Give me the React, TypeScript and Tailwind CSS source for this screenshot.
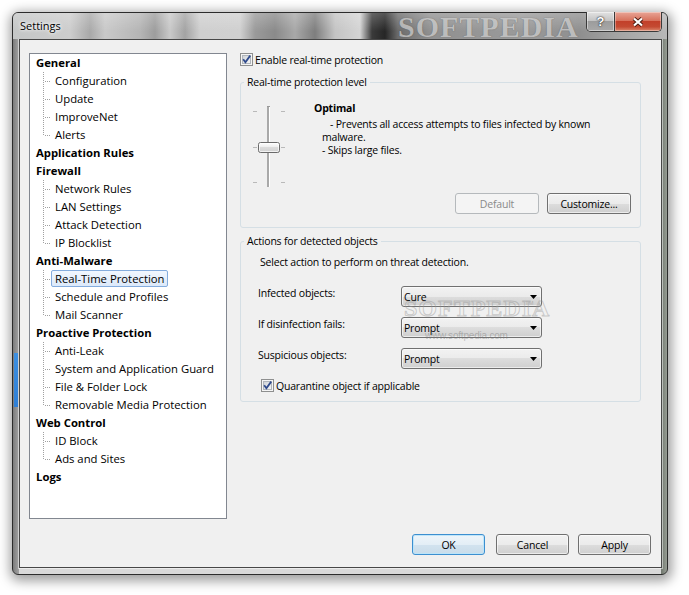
import React from 'react';

const tree: { label: string; children: string[] }[] = [
  { label: 'General', children: ['Configuration', 'Update', 'ImproveNet', 'Alerts'] },
  { label: 'Application Rules', children: [] },
  { label: 'Firewall', children: ['Network Rules', 'LAN Settings', 'Attack Detection', 'IP Blocklist'] },
  { label: 'Anti-Malware', children: ['Real-Time Protection', 'Schedule and Profiles', 'Mail Scanner'] },
  {
    label: 'Proactive Protection',
    children: ['Anti-Leak', 'System and Application Guard', 'File & Folder Lock', 'Removable Media Protection'],
  },
  { label: 'Web Control', children: ['ID Block', 'Ads and Sites'] },
  { label: 'Logs', children: [] },
];

function Connector({ last }: { last: boolean }) {
  return (
    <svg width="8" height="18" className="shrink-0" aria-hidden>
      <line x1="0.5" y1="0" x2="0.5" y2={last ? 10 : 18} stroke="#a0a0a0" strokeDasharray="1 1" />
      <line x1="2" y1="9.5" x2="8" y2="9.5" stroke="#a0a0a0" strokeDasharray="1 1" />
    </svg>
  );
}

function CheckBox() {
  return (
    <svg width="13" height="13" viewBox="0 0 13 13" className="shrink-0" aria-hidden>
      <defs>
        <linearGradient id="cbfill" x1="0" y1="0" x2="1" y2="1">
          <stop offset="0" stopColor="#cdd1d6" />
          <stop offset="1" stopColor="#f7f7f7" />
        </linearGradient>
      </defs>
      <rect x="0.5" y="0.5" width="12" height="12" fill="#f5f5f5" stroke="#8e8f8f" />
      <rect x="2.5" y="2.5" width="8" height="8" fill="url(#cbfill)" stroke="#b0b5bb" />
      <path d="M3.2 6.3 L5.4 9.2 L10.2 2.6" fill="none" stroke="#2f4a8c" strokeWidth="1.8" />
    </svg>
  );
}

function Slider() {
  return (
    <svg width="35" height="83" viewBox="0 0 35 83" className="shrink-0" aria-hidden>
      <defs>
        <linearGradient id="thumb" x1="0" y1="0" x2="0" y2="1">
          <stop offset="0" stopColor="#ffffff" />
          <stop offset="0.5" stopColor="#ececec" />
          <stop offset="0.5" stopColor="#dcdcdc" />
          <stop offset="1" stopColor="#d0d0d0" />
        </linearGradient>
      </defs>
      <rect x="14" y="1" width="2" height="81" fill="#a9a9a9" />
      <rect x="16" y="1" width="1" height="81" fill="#ffffff" />
      <rect x="14" y="1" width="3" height="1" fill="#9a9a9a" />
      {[6, 42, 77].map((y) => (
        <g key={y}>
          <rect x="0" y={y} width="4" height="1" fill="#b9b9b9" />
          <rect x="28" y={y} width="4" height="1" fill="#b9b9b9" />
        </g>
      ))}
      <rect x="5.5" y="37.5" width="21" height="10" rx="2" fill="url(#thumb)" stroke="#6a6a6a" />
      <rect x="6.5" y="38.5" width="19" height="8" rx="1" fill="none" stroke="#ffffff" strokeOpacity="0.7" />
    </svg>
  );
}

function Combo({ value }: { value: string }) {
  return (
    <div className="flex h-[21px] w-[141px] shrink-0 items-center rounded-[3px] border border-[#707070] bg-[linear-gradient(180deg,#f2f2f2_0%,#ebebeb_50%,#dddddd_50%,#cfcfcf_100%)] pl-[2px] pr-[4px] shadow-[inset_0_0_0_1px_rgba(255,255,255,0.6)]">
      <span className="mt-[1px] leading-[16px]">{value}</span>
      <svg width="7" height="4" viewBox="0 0 7 4" className="ml-auto" aria-hidden>
        <path d="M0 0H7L3.5 4Z" fill="#000" />
      </svg>
    </div>
  );
}

function Btn({
  children,
  w,
  kind = 'normal',
}: {
  children: React.ReactNode;
  w: string;
  kind?: 'normal' | 'default' | 'disabled';
}) {
  const base = 'flex h-[21px] shrink-0 items-center justify-center rounded-[3px] border leading-[16px] ';
  const style =
    kind === 'default'
      ? 'border-[#3c8fd0] bg-[linear-gradient(180deg,#eef5fa_0%,#e3eef6_50%,#d2e3ef_50%,#c9dcea_100%)] shadow-[inset_0_0_0_1px_rgba(186,228,250,0.9)] text-black'
      : kind === 'disabled'
      ? 'border-[#b5b9bc] bg-[#f4f4f4] text-[#8a8a8a]'
      : 'border-[#707070] bg-[linear-gradient(180deg,#f2f2f2_0%,#ebebeb_50%,#dddddd_50%,#cfcfcf_100%)] shadow-[inset_0_0_0_1px_rgba(255,255,255,0.6)] text-black';
  return <div className={base + style + ' ' + w}>{children}</div>;
}

export default function App() {
  return (
    <div className="h-[595px] w-[689px] overflow-hidden bg-white pt-[12px] pl-[12px] font-['Open_Sans',sans-serif] text-[10.5px] leading-[16px] tracking-[-0.2px] text-black">
      <div className="relative flex h-[563px] w-[656px] flex-col rounded-[6px] border border-[#2c2c2c] shadow-[1px_3px_12px_3px_rgba(0,0,0,0.38)] [background:linear-gradient(180deg,#3d8fe0,#2f7fd6)_1px_340px/4px_54px_no-repeat,linear-gradient(90deg,#7c7c7c_0px,#a4a4a4_6px,#d9d9d9_6px,#d9d9d9_648px,#6f766d_648px,#979d94_654px)]">
        {/* title bar */}
        <div className="relative flex h-[26px] items-start rounded-t-[5px] [background:linear-gradient(180deg,rgba(255,255,255,0.22),rgba(255,255,255,0)_70%),linear-gradient(90deg,#c4c6c6_0px,#cdcdcd_57px,#a9a9a9_77px,#c9c9c9_92px,#b5b5b5_127px,#9d9d9d_142px,#c9c9c9_157px,#a3a3a3_172px,#cfcfcf_187px,#d0d0d0_227px,#9a9a9a_242px,#8a8a8a_262px,#a8a8a8_282px,#7e7e7e_302px,#c4c4c4_322px,#d4d4d4_347px,#3a3a3a_359px,#262626_372px,#6b6b6b_385px,#909090_417px,#9a9a9a_507px,#8f8f8f_567px,#a5a5a5_607px,#b8b8b8_655px)]">
          <span className="ml-[7px] mt-[5px] text-[11px] tracking-normal [text-shadow:0_0_5px_#fff,0_0_3px_#fff]">
            Settings
          </span>
          <span className="pointer-events-none absolute left-[385px] top-[-1px] font-['Liberation_Serif',serif] text-[30px] font-bold leading-[30px] tracking-[1px] text-[#cfcfcf] opacity-70 [text-shadow:0_0_1px_#4a4a4a]">
            SOFTPEDIA
          </span>
          <div className="relative ml-auto mr-[5px] mt-[-1px] flex h-[20px] overflow-hidden rounded-b-[5px] border border-t-0 border-[#3a3a3a]">
            <div className="flex h-full w-[28px] items-center justify-center border-r border-[#3a3a3a] bg-[linear-gradient(180deg,#e2e2e2_0%,#c4c4c4_45%,#9c9c9c_50%,#a9a9a9_100%)] shadow-[inset_0_0_0_1px_rgba(255,255,255,0.45)]">
              <span className="font-['Liberation_Sans',sans-serif] text-[13px] font-bold leading-[14px] tracking-normal text-white [text-shadow:0_0_1px_#222,0_0_2px_#222]">
                ?
              </span>
            </div>
            <div className="flex h-full w-[46px] items-center justify-center bg-[linear-gradient(180deg,#e9a596_0%,#d7725d_45%,#c2402a_50%,#c44a32_78%,#dc8a6f_100%)] shadow-[inset_0_0_0_1px_rgba(255,255,255,0.35)]">
              <svg width="12" height="10" viewBox="0 0 12 10" aria-hidden>
                <path d="M2 1.5L10 8.5M10 1.5L2 8.5" stroke="#4b1a10" strokeWidth="4" />
                <path d="M2 1.5L10 8.5M10 1.5L2 8.5" stroke="#ffffff" strokeWidth="2.2" />
              </svg>
            </div>
          </div>
        </div>

        {/* client area */}
        <div className="mb-[6px] ml-[6px] mr-[5px] flex flex-1 flex-col border border-[#474747] bg-[#f0f0f0] pl-[9px] pt-[13px] shadow-[0_0_0_1px_rgba(255,255,255,0.5)]">
          <div className="flex h-[466px]">
            {/* tree */}
            <div className="h-[466px] w-[198px] shrink-0 border border-[#828790] bg-white text-[11.3px] tracking-normal">
              {tree.map((cat) => (
                <div key={cat.label}>
                  <div className="flex h-[18px] items-center pl-[6px] font-bold">{cat.label}</div>
                  {cat.children.map((child, i) => {
                    const selected = child === 'Real-Time Protection';
                    return (
                      <div key={child} className="flex h-[18px] items-start pl-[13px]">
                        <Connector last={i === cat.children.length - 1} />
                        <span
                          className={
                            'flex h-[17px] items-center whitespace-nowrap rounded-[2px] border px-[3px] ' +
                            (selected
                              ? 'border-[#84acdd] bg-[linear-gradient(180deg,#f1f7fe_0%,#dce9fa_100%)]'
                              : 'border-transparent')
                          }
                        >
                          {child}
                        </span>
                      </div>
                    );
                  })}
                </div>
              ))}
            </div>

            {/* right pane */}
            <div className="ml-[13px] w-[401px] shrink-0">
              <div className="flex h-[13px] items-center">
                <CheckBox />
                <span className="ml-[2px]">Enable real-time protection</span>
              </div>

              <fieldset className="mt-[8px] rounded-[3px] border border-[#d5dfe5] pb-[13px]">
                <legend className="ml-[3px] px-[3px] leading-[16px]">Real-time protection level</legend>
                <div className="flex h-[103px] items-start">
                  <div className="ml-[12px] mt-[15px]">
                    <Slider />
                  </div>
                  <div className="ml-[26px] mt-[11px]">
                    <div className="font-bold leading-[15px]">Optimal</div>
                    <div className="ml-[8px] mt-[2px] whitespace-nowrap leading-[13px]">
                      <div className="pl-[8px]">- Prevents all access attempts to files infected by known</div>
                      <div>malware.</div>
                      <div>- Skips large files.</div>
                    </div>
                  </div>
                </div>
                <div className="flex justify-end gap-[8px] pr-[9px]">
                  <Btn w="w-[84px]" kind="disabled">
                    Default
                  </Btn>
                  <Btn w="w-[84px]">Customize...</Btn>
                </div>
              </fieldset>

              <fieldset className="relative mt-[5px] rounded-[3px] border border-[#d5dfe5] pb-[9px]">
                <legend className="ml-[3px] px-[3px] leading-[16px]">Actions for detected objects</legend>
                <div className="ml-[19px] mt-[5px]">Select action to perform on threat detection.</div>
                {[
                  ['Infected objects:', 'Cure'],
                  ['If disinfection fails:', 'Prompt'],
                  ['Suspicious objects:', 'Prompt'],
                ].map(([label, value], i) => (
                  <div key={label} className={'flex items-start ' + (i === 0 ? 'mt-[16px]' : 'mt-[10px]')}>
                    <span className="ml-[17px] mt-[-1px] w-[143px] shrink-0">{label}</span>
                    <Combo value={value} />
                  </div>
                ))}
                <div className="ml-[20px] mt-[10px] flex h-[13px] items-center">
                  <CheckBox />
                  <span className="ml-[2px]">Quarantine object if applicable</span>
                </div>
                <span className="pointer-events-none absolute left-[163px] top-[47px] font-['Liberation_Serif',serif] text-[24px] font-bold leading-[24px] tracking-[1px] text-transparent [-webkit-text-stroke:1px_rgba(150,150,150,0.45)]">
                  SOFTPEDIA
                </span>
                <span className="pointer-events-none absolute left-[284px] top-[51px] font-['Liberation_Sans',sans-serif] text-[6px] leading-[6px] text-[#b0b0b0]">
                  TM
                </span>
                <span className="pointer-events-none absolute left-[184px] top-[81px] font-['Liberation_Sans',sans-serif] text-[10px] leading-[12px] text-[rgba(120,120,120,0.45)]">
                  www.softpedia.com
                </span>
              </fieldset>
            </div>
          </div>

          {/* bottom buttons */}
          <div className="mt-[15px] flex justify-end pr-[10px]">
            <Btn w="w-[73px]" kind="default">
              OK
            </Btn>
            <div className="ml-[11px]">
              <Btn w="w-[73px]">Cancel</Btn>
            </div>
            <div className="ml-[9px]">
              <Btn w="w-[73px]">Apply</Btn>
            </div>
          </div>
        </div>
      </div>
    </div>
  );
}
